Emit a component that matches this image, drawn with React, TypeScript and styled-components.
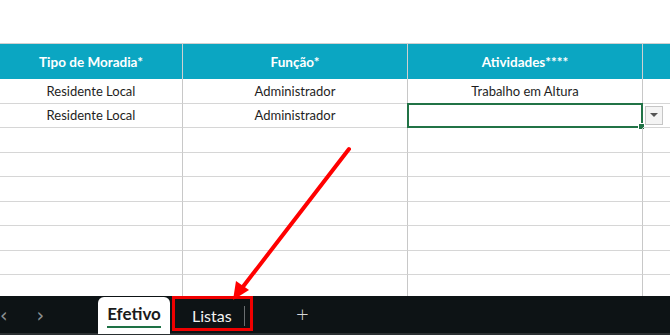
import React from 'react';
import styled, { createGlobalStyle } from 'styled-components';

const GlobalStyle = createGlobalStyle`
  html, body {
    margin: 0;
    padding: 0;
    background: #ffffff;
  }
  body {
    font-family: 'Lato', 'Open Sans', sans-serif;
  }
`;

const Page = styled.div`
  position: relative;
  width: 670px;
  height: 335px;
  overflow: hidden;
  display: flex;
  flex-direction: column;
  background: #ffffff;
`;

const TopSpace = styled.div`
  height: 43px;
  flex-shrink: 0;
`;

const Sheet = styled.div`
  flex: 1;
  overflow: hidden;
  display: grid;
  grid-template-columns: 183px 225px 235px 1fr;
  grid-auto-rows: 24.5px;
  grid-template-rows: 36px;
  align-content: start;
`;

const HeadCell = styled.div<{ last?: boolean }>`
  background: #0ba6c2;
  color: #ffffff;
  font-weight: 700;
  font-size: 13.5px;
  display: flex;
  align-items: center;
  justify-content: center;
  border-right: ${p => (p.last ? 'none' : '1px solid #d0d0d0')};
  border-top: 1px solid #d0d0d0;
  box-sizing: border-box;
`;

const Cell = styled.div<{ last?: boolean }>`
  position: relative;
  font-size: 13px;
  color: #1e1e1e;
  display: flex;
  align-items: center;
  justify-content: center;
  border-right: ${p => (p.last ? 'none' : '1px solid #c8c8c8')};
  border-bottom: 1px solid #d6d6d6;
  box-sizing: border-box;
`;

const Selected = styled.div`
  position: absolute;
  left: -1px;
  top: -1px;
  right: -1px;
  bottom: -1px;
  border: 2px solid #217346;
`;

const Handle = styled.div`
  position: absolute;
  right: -4px;
  bottom: -4px;
  width: 5px;
  height: 5px;
  background: #217346;
  border: 1px solid #ffffff;
`;

const DropBtn = styled.div`
  position: absolute;
  left: 2px;
  top: 2px;
  width: 18px;
  height: 19px;
  box-sizing: border-box;
  border: 1px solid #c6c6c6;
  background: #f4f4f4;
  display: flex;
  align-items: center;
  justify-content: center;

  &::after {
    content: '';
    border-left: 4px solid transparent;
    border-right: 4px solid transparent;
    border-top: 4px solid #555;
  }
`;

const TabBar = styled.div`
  height: 39px;
  flex-shrink: 0;
  background: #0d1315;
  border-bottom: 2px solid #2a2f31;
  box-sizing: border-box;
  display: flex;
  align-items: flex-start;
`;

const NavArrows = styled.div`
  width: 98px;
  height: 100%;
  display: flex;
  align-items: center;
  gap: 29px;
  color: #8a8f91;
  font-size: 19px;
  font-family: 'DejaVu Sans', sans-serif;
`;

const NavGlyph = styled.span<{ shift?: number }>`
  margin-left: ${p => p.shift ?? 0}px;
`;

const SheetTab = styled.div`
  width: 72px;
  height: 37px;
  background: #ffffff;
  border-radius: 6px 6px 0 0;
  display: flex;
  align-items: center;
  justify-content: center;
  margin-top: 1px;
`;

const ActiveLabel = styled.span`
  font-weight: 700;
  font-size: 17px;
  color: #1b1b1b;
  padding-bottom: 2px;
  border-bottom: 2px solid #1e7145;
  line-height: 20px;
`;

const MarkedTab = styled.div`
  margin-left: 2px;
  width: 81px;
  height: 35px;
  box-sizing: border-box;
  border: 3px solid #f00000;
  display: flex;
  align-items: center;
  color: #f2f2f2;
  font-size: 16px;
  padding-left: 17px;
  padding-top: 4px;
`;

const TabSep = styled.span`
  width: 1px;
  height: 20px;
  background: #6b6f71;
  margin-left: auto;
  margin-right: 5px;
`;

const AddTab = styled.div`
  margin-left: 43px;
  height: 35px;
  display: flex;
  align-items: center;
  color: #d8d8d8;
  font-size: 22px;
  font-weight: 300;
`;

const Overlay = styled.svg`
  position: absolute;
  left: 0;
  top: 0;
  pointer-events: none;
`;

const cols = ['Tipo de Moradia*', 'Função*', 'Atividades****', ''];
const rows: string[][] = [
  ['Residente Local', 'Administrador', 'Trabalho em Altura', ''],
  ['Residente Local', 'Administrador', '', ''],
];

export default function App() {
  const emptyRows = 8;
  return (
    <>
      <GlobalStyle />
      <Page>
        <TopSpace />
        <Sheet>
          {cols.map((c, i) => (
            <HeadCell key={i} last={i === 3}>{c}</HeadCell>
          ))}
          {rows.map((r, ri) =>
            r.map((v, ci) => (
              <Cell key={`${ri}-${ci}`} last={ci === 3}>
                {v}
                {ri === 1 && ci === 2 && (
                  <Selected>
                    <Handle />
                  </Selected>
                )}
                {ri === 1 && ci === 3 && <DropBtn />}
              </Cell>
            ))
          )}
          {Array.from({ length: emptyRows * 4 }).map((_, i) => (
            <Cell key={`e${i}`} last={i % 4 === 3} />
          ))}
        </Sheet>
        <TabBar>
          <NavArrows>
            <NavGlyph shift={0}>‹</NavGlyph>
            <NavGlyph>›</NavGlyph>
          </NavArrows>
          <SheetTab>
            <ActiveLabel>Efetivo</ActiveLabel>
          </SheetTab>
          <MarkedTab>
            Listas
            <TabSep />
          </MarkedTab>
          <AddTab>+</AddTab>
        </TabBar>
        <Overlay width={670} height={335}>
          <line x1={349} y1={149} x2={242} y2={288} stroke="#ff0000" strokeWidth={4} strokeLinecap="round" />
          <polygon points="233,300 236,281 249,290" fill="#ff0000" />
        </Overlay>
      </Page>
    </>
  );
}
